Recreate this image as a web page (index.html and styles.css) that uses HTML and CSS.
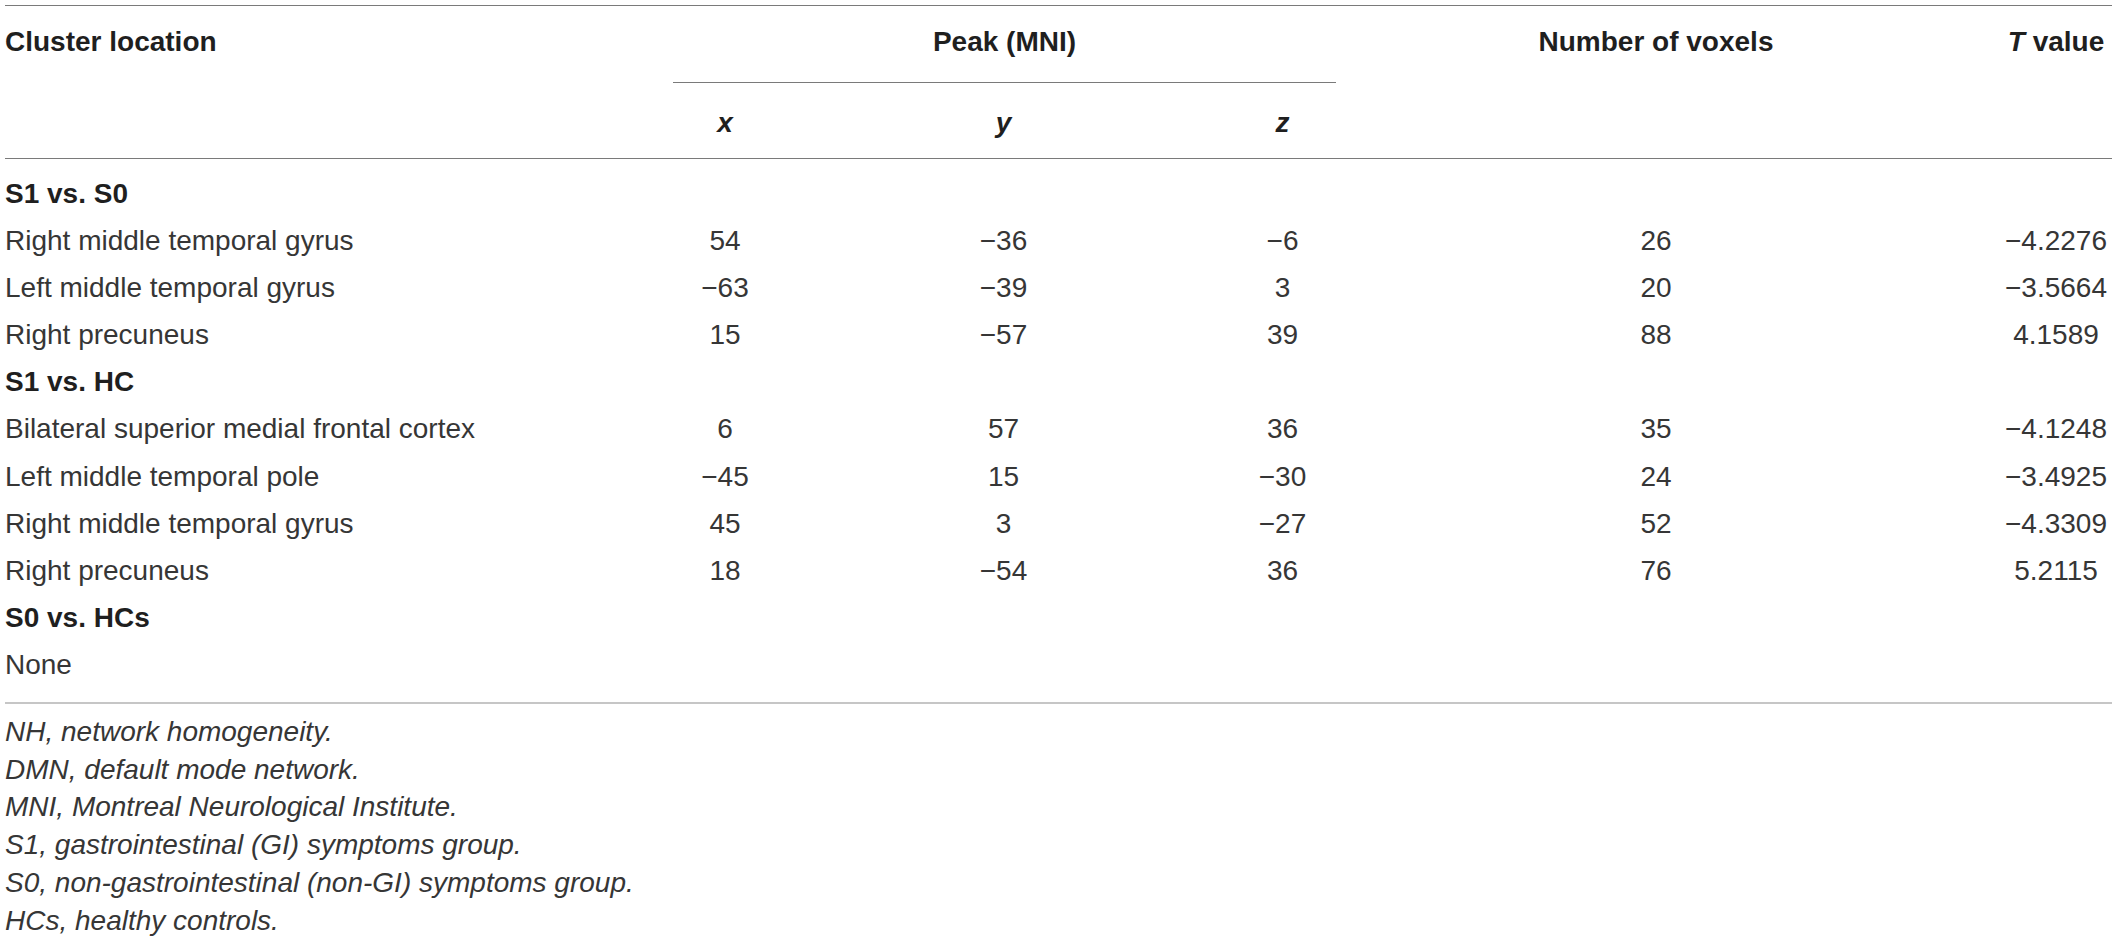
FILE: index.html
```html
<!DOCTYPE html>
<html lang="en">
<head>
<meta charset="utf-8">
<title>Table</title>
<link rel="stylesheet" href="styles.css">
</head>
<body>
<div class="page">
  <div class="tbl">
    <div class="thead">
      <div class="th loc">Cluster location</div>
      <div class="th peak">Peak (MNI)</div>
      <div class="th vox">Number of voxels</div>
      <div class="th tval"><i>T</i> value</div>
      <div class="th coord cx"><i>x</i></div>
      <div class="th coord cy"><i>y</i></div>
      <div class="th coord cz"><i>z</i></div>
    </div>
    <div class="tbody">
      <div class="row group"><div class="cell name">S1 vs. S0</div></div>
      <div class="row"><div class="cell name">Right middle temporal gyrus</div><div class="cell">54</div><div class="cell">−36</div><div class="cell">−6</div><div class="cell">26</div><div class="cell t">−4.2276</div></div>
      <div class="row"><div class="cell name">Left middle temporal gyrus</div><div class="cell">−63</div><div class="cell">−39</div><div class="cell">3</div><div class="cell">20</div><div class="cell t">−3.5664</div></div>
      <div class="row"><div class="cell name">Right precuneus</div><div class="cell">15</div><div class="cell">−57</div><div class="cell">39</div><div class="cell">88</div><div class="cell t">4.1589</div></div>
      <div class="row group"><div class="cell name">S1 vs. HC</div></div>
      <div class="row"><div class="cell name">Bilateral superior medial frontal cortex</div><div class="cell">6</div><div class="cell">57</div><div class="cell">36</div><div class="cell">35</div><div class="cell t">−4.1248</div></div>
      <div class="row"><div class="cell name">Left middle temporal pole</div><div class="cell">−45</div><div class="cell">15</div><div class="cell">−30</div><div class="cell">24</div><div class="cell t">−3.4925</div></div>
      <div class="row"><div class="cell name">Right middle temporal gyrus</div><div class="cell">45</div><div class="cell">3</div><div class="cell">−27</div><div class="cell">52</div><div class="cell t">−4.3309</div></div>
      <div class="row"><div class="cell name">Right precuneus</div><div class="cell">18</div><div class="cell">−54</div><div class="cell">36</div><div class="cell">76</div><div class="cell t">5.2115</div></div>
      <div class="row group"><div class="cell name">S0 vs. HCs</div></div>
      <div class="row"><div class="cell name">None</div></div>
    </div>
  </div>
  <div class="notes">
    <p>NH, network homogeneity.</p>
    <p>DMN, default mode network.</p>
    <p>MNI, Montreal Neurological Institute.</p>
    <p>S1, gastrointestinal (GI) symptoms group.</p>
    <p>S0, non-gastrointestinal (non-GI) symptoms group.</p>
    <p>HCs, healthy controls.</p>
  </div>
</div>
</body>
</html>
```

FILE: styles.css
```css
* { box-sizing: border-box; }

html, body {
  margin: 0;
  padding: 0;
  background: #ffffff;
}

body {
  font-family: "Liberation Sans", Arial, sans-serif;
  font-size: 28px;
  color: #363636;
}

.page {
  padding: 5px 5px 0 5px;
  width: 2117px;
}

.tbl {
  width: 2107px;
}

.thead {
  display: grid;
  grid-template-columns: 581px 278px 279px 279px 468px 222px;
  grid-template-rows: 77px 75px;
  border-top: 1px solid #7a7a7a;
  border-bottom: 1px solid #7a7a7a;
}

.th {
  font-weight: bold;
  color: #1f1f1f;
  line-height: 32px;
  padding-top: 20px;
}

.loc { grid-column: 1; grid-row: 1 / 3; text-align: left; }
.peak {
  grid-column: 2 / 5;
  grid-row: 1;
  margin: 0 86px 0 87px;
  text-align: center;
  border-bottom: 1px solid #7a7a7a;
}
.vox { grid-column: 5; grid-row: 1 / 3; text-align: center; }
.tval { grid-column: 6; grid-row: 1 / 3; text-align: center; padding-left: 110px; }
.coord { grid-row: 2; text-align: center; padding-top: 24px; }
.cx { grid-column: 2; }
.cy { grid-column: 3; }
.cz { grid-column: 4; }

.tbody {
  padding: 11px 0 14px 0;
}

.row {
  display: grid;
  grid-template-columns: 581px 278px 279px 279px 468px 222px;
  height: 47.1px;
  line-height: 47.1px;
}

.cell {
  text-align: center;
  white-space: nowrap;
}

.cell.name { text-align: left; }
.cell.t { padding-left: 110px; }

.group .cell.name {
  font-weight: bold;
  color: #1f1f1f;
}

.notes {
  border-top: 2px solid #c6c6c6;
  padding-top: 9px;
  width: 2107px;
}

.notes p {
  margin: 0;
  font-style: italic;
  line-height: 37.7px;
  color: #363636;
}
```
